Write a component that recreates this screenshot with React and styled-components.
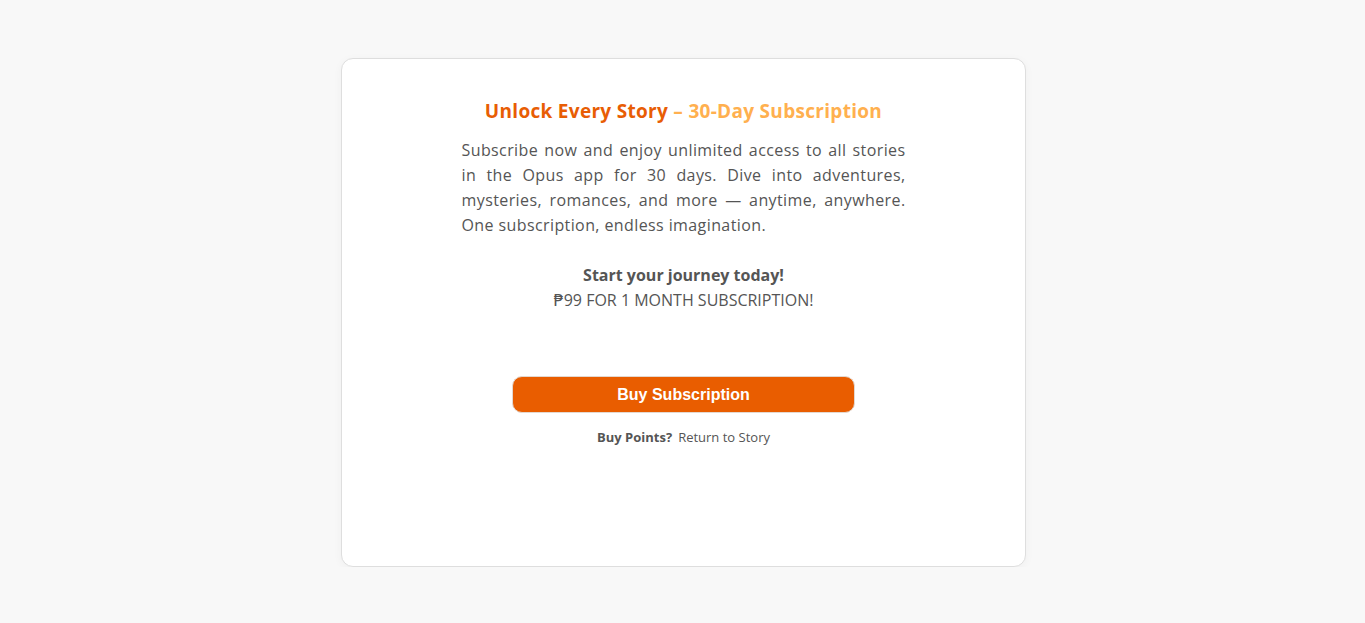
import React from "react";
import styled, { createGlobalStyle } from "styled-components";

const Global = createGlobalStyle`
  html, body { margin: 0; padding: 0; background: #f8f8f8; }
  body { font-family: "Open Sans", "DejaVu Sans", sans-serif; }
  * { box-sizing: border-box; }
`;

const Page = styled.div`
  display: flex;
  justify-content: center;
  padding: 58px 0 0 2px;
`;

const Card = styled.div`
  width: 685px;
  height: 509px;
  background: #fff;
  border: 1px solid #dedede;
  border-radius: 12px;
  box-shadow: 0 2px 10px rgba(0, 0, 0, 0.04);
  display: flex;
  flex-direction: column;
  align-items: center;
  padding-top: 39px;
`;

const Title = styled.h2`
  margin: 0;
  font-size: 19px;
  line-height: 27px;
  font-weight: 700;
  letter-spacing: 0.3px;
  color: #e85d04;
  text-align: center;
`;

const Accent = styled.span`
  color: #ffb04f;
`;

const Body = styled.p`
  margin: 13px 0 0;
  width: 444px;
  font-size: 16px;
  line-height: 25px;
  letter-spacing: 0.4px;
  color: #555;
  text-align: justify;
`;

const Cta = styled.div`
  margin-top: 25px;
  font-size: 16px;
  line-height: 25px;
  color: #555;
  text-align: center;
`;

const Strong = styled.div`
  font-weight: 700;
`;

const BuyButton = styled.button`
  margin-top: 63px;
  width: 343px;
  height: 37px;
  border: 1px solid #e3d8d0;
  border-radius: 10px;
  background: #e95d00;
  color: #fff;
  font-family: "Liberation Sans", Arial, sans-serif;
  font-weight: 700;
  font-size: 16px;
  cursor: pointer;
`;

const Links = styled.div`
  margin-top: 14px;
  display: flex;
  gap: 6px;
  font-size: 13px;
  line-height: 20px;
  color: #555;
`;

const Bold = styled.span`
  font-weight: 700;
`;

export default function App() {
  return (
    <>
      <Global />
      <Page>
        <Card>
          <Title>
            Unlock Every Story <Accent>– 30-Day Subscription</Accent>
          </Title>
          <Body>
            Subscribe now and enjoy unlimited access to all stories in the Opus app for 30 days. Dive into adventures, mysteries, romances, and more — anytime, anywhere. One subscription, endless imagination.
          </Body>
          <Cta>
            <Strong>Start your journey today!</Strong>
            <div>₱99 FOR 1 MONTH SUBSCRIPTION!</div>
          </Cta>
          <BuyButton>Buy Subscription</BuyButton>
          <Links>
            <Bold>Buy Points?</Bold>
            <span>Return to Story</span>
          </Links>
        </Card>
      </Page>
    </>
  );
}
